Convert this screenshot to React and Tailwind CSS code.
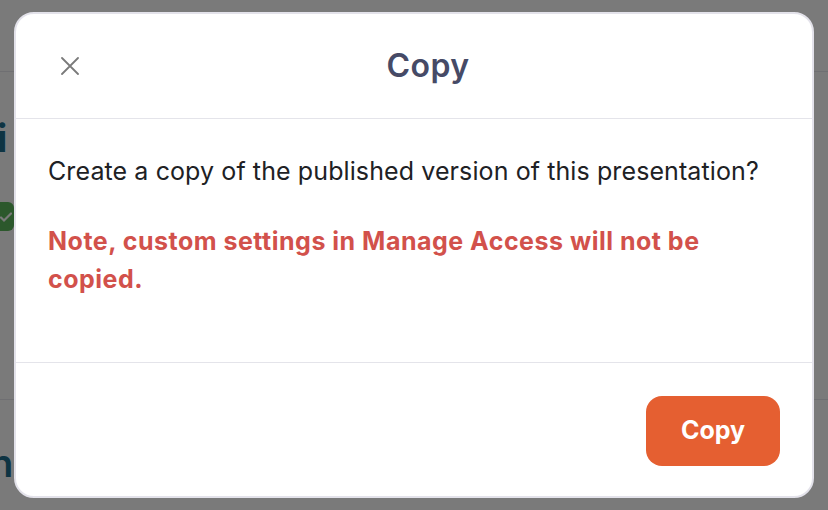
import React from 'react';

function BackgroundPage() {
  // page behind the dialog, only its left edge shows
  return (
    <div className="h-[510px] w-full bg-white flex flex-col">
      <div className="h-[72px] border-b border-[#e8e8ee] shrink-0" />
      <div className="flex flex-col">
        <div className="-ml-[3px] mt-[46px] text-[38px] leading-[40px] font-bold text-[#1f6d8c]">i</div>
        <div className="mt-[44px] -ml-[6px] w-[20px] h-[29px] rounded-[6px] bg-[#5cb85c] flex items-center justify-end pr-[2px]">
          <svg width="12" height="12" viewBox="0 0 12 12" fill="none" stroke="white" strokeWidth="2.2" strokeLinecap="round">
            <path d="M1 6.5l3 3 7-7" />
          </svg>
        </div>
      </div>
      <div className="mt-[168px] border-t border-[#e8e8ee]" />
      <div className="-ml-[10px] mt-[43px] text-[38px] leading-[40px] font-semibold text-[#1f6d8c]">n</div>
    </div>
  );
}

export default function App() {
  return (
    <div className="relative h-[510px] w-[828px] overflow-hidden font-['Inter',sans-serif]">
      <BackgroundPage />
      <div className="absolute inset-0 bg-black/[0.52] flex items-center justify-center">
        <div className="w-[800px] h-[486px] bg-white rounded-[20px] border-2 border-[#e3e2ea] flex flex-col overflow-hidden">
          <div className="h-[105px] flex items-center border-b border-[#e4e4ea] shrink-0">
            <button className="ml-[45px] flex items-center justify-center">
              <svg width="18" height="18" viewBox="0 0 18 18" fill="none" stroke="#7a7a7a" strokeWidth="1.8" strokeLinecap="round">
                <path d="M1 1l16 16M17 1L1 17" />
              </svg>
            </button>
            <h2 className="flex-1 text-center pr-[35px] text-[32px] font-semibold text-[#464a66] tracking-[0.4px]">Copy</h2>
          </div>

          <div className="flex-1 px-8 pt-[33px] text-[25px] leading-[38px]">
            <p className="text-[#202124] mb-8 tracking-[0.1px]">Create a copy of the published version of this presentation?</p>
            <p className="text-[#d2514b] font-bold tracking-[0.5px]">Note, custom settings in Manage Access will not be copied.</p>
          </div>

          <div className="border-t border-[#e4e4ea] px-8 pt-[33px] pb-[30px] flex justify-end shrink-0">
            <button className="w-[134px] h-[70px] rounded-[16px] bg-[#e55f31] text-white text-[25px] font-bold">
              Copy
            </button>
          </div>
        </div>
      </div>
    </div>
  );
}
